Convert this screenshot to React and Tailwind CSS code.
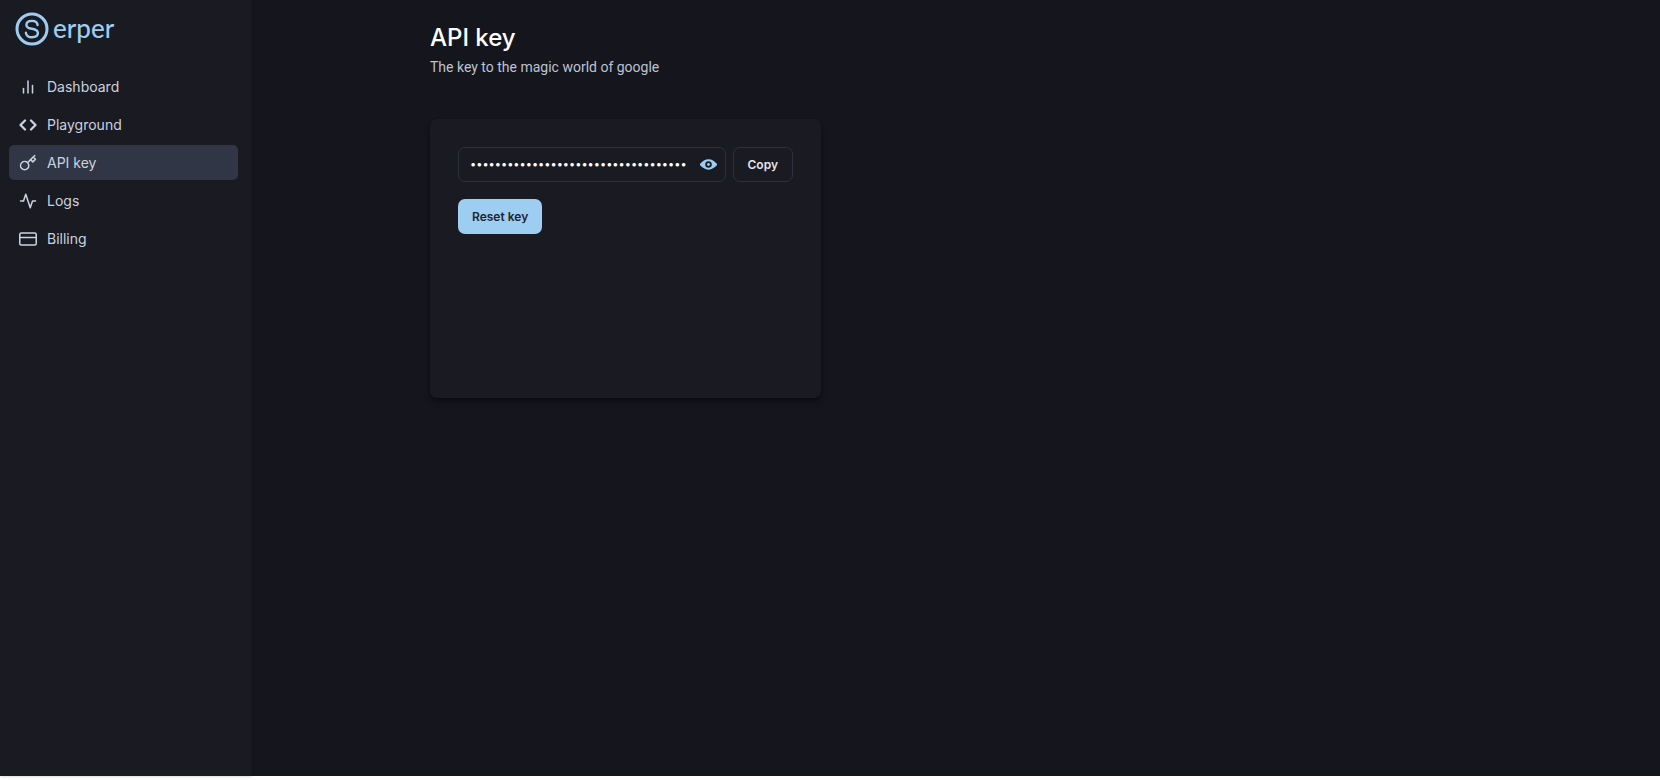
import { useState } from "react";
import { FiActivity, FiBarChart2, FiCode, FiCreditCard, FiKey } from "react-icons/fi";

const links = [
  { label: "Dashboard", Icon: FiBarChart2 },
  { label: "Playground", Icon: FiCode, stroke: 3 },
  { label: "API key", Icon: FiKey, active: true },
  { label: "Logs", Icon: FiActivity },
  { label: "Billing", Icon: FiCreditCard },
];

function Logo() {
  return (
    <a href="#home" className="flex items-start gap-1 px-[15px] text-[#9dcdf1]">
      <svg viewBox="0 0 34 34" className="size-[34px]" fill="none" stroke="currentColor" aria-hidden="true">
        <circle cx="17" cy="17" r="15" strokeWidth="3" />
        <path
          d="M22.6 13C22.3 10.5 20.1 8.9 17 8.9c-3.3 0-5.6 1.6-5.6 4 0 2.6 2.2 3.4 5.6 3.9 3.6.6 5.9 1.500 5.9 4.2 0 2.6-2.5 4.2-5.9 4.2-3.500 0-5.800-1.700-6.100-4.400"
          strokeWidth="2.4"
          strokeLinecap="round"
        />
      </svg>
      <span className="font-['Lato',sans-serif] text-[26px] leading-8 font-medium">erper</span>
    </a>
  );
}

function EyeIcon() {
  return (
    <svg viewBox="0 0 24 24" className="size-[17px]" fill="currentColor" aria-hidden="true">
      <path d="M23.432,10.524C20.787,7.614,16.4,4.538,12,4.6,7.6,4.537,3.213,7.615,.568,10.524a2.211,2.211,0,0,0,0,2.948C3.182,16.351,7.507,19.4,11.839,19.4h.308c4.347,0,8.671-3.049,11.288-5.929A2.21,2.21,0,0,0,23.432,10.524ZM7.4,12A4.6,4.6,0,1,1,12,16.6,4.6,4.6,0,0,1,7.4,12Z" />
      <circle cx="12" cy="12" r="2" />
    </svg>
  );
}

export default function App() {
  const [visible, setVisible] = useState(false);
  return (
    <div className="h-screen bg-white pb-1 font-['Inter',sans-serif] text-[14px]">
      <div className="flex h-full bg-[#15151e]">
        <aside className="flex w-[252px] shrink-0 flex-col gap-[23px] bg-[#1a1a23] pt-3 shadow-sm">
          <Logo />
          <nav className="flex flex-col gap-[3px] pr-[14px] pl-[9px]">
            {links.map(({ label, Icon, active, stroke = 2 }) => (
              <a
                key={label}
                href="#nav"
                aria-current={active ? "page" : undefined}
                className={`flex h-[35px] items-center gap-[10px] rounded-[5px] px-[10px] text-[#cbd3df] ${active ? "bg-[#303646]" : ""}`}
              >
                <Icon className="size-[18px]" strokeWidth={stroke} aria-hidden="true" />
                {label}
              </a>
            ))}
          </nav>
        </aside>
        <main className="min-w-0 flex-1 px-8">
          <div className="mx-auto max-w-[1052px] pt-[21px]">
            <h1 className="text-[24px] leading-[34px] font-medium text-white">API key</h1>
            <p className="mt-[2px] font-['Roboto',sans-serif] leading-5 text-[#bcc4d0]">The key to the magic world of google</p>
            <section className="mt-[42px] flex min-h-[279px] max-w-[391px] flex-col items-start gap-[17px] rounded-[7px] bg-[#1a1a23] p-7 shadow-md shadow-black/40">
              <div className="flex w-full gap-[7px]">
                <div className="flex h-[35px] min-w-0 flex-1 items-center rounded-[7px] border border-[#2b3140] pr-2 pl-[11px]">
                  <input
                    type={visible ? "text" : "password"}
                    aria-label="API key"
                    readOnly
                    defaultValue={"0".repeat(35)}
                    className="min-w-0 flex-1 bg-transparent text-[11px] text-white outline-none"
                  />
                  <button
                    type="button"
                    aria-label={visible ? "Hide key" : "Show key"}
                    onClick={() => setVisible(!visible)}
                    className="text-[#9dcdf1]"
                  >
                    <EyeIcon />
                  </button>
                </div>
                <button type="button" className="h-[35px] rounded-[7px] border border-[#2b3140] px-[14px] text-[12px] font-semibold text-[#e2e4ea]">
                  Copy
                </button>
              </div>
              <button type="button" className="h-[35px] rounded-[7px] bg-[#9dcdf1] px-[14px] text-[12px] font-semibold text-[#1c2432]">
                Reset key
              </button>
            </section>
          </div>
        </main>
      </div>
    </div>
  );
}
